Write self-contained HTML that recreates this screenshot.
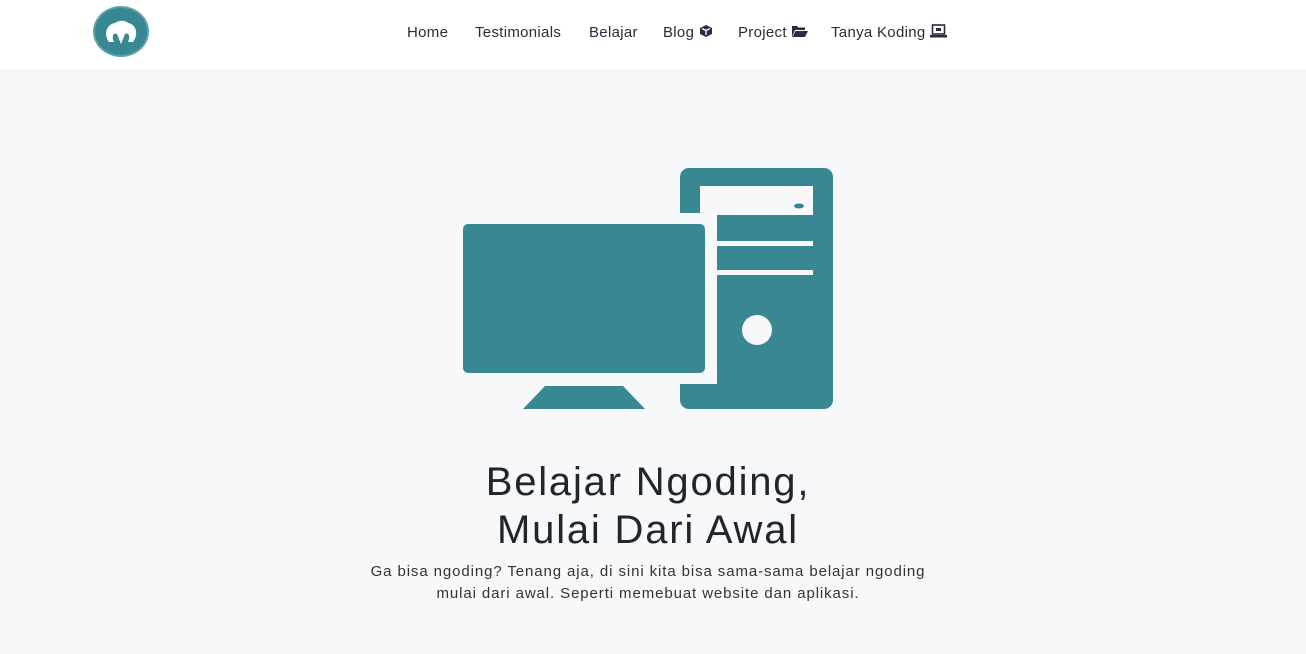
<!DOCTYPE html>
<html><head><meta charset="utf-8"><style>
*{margin:0;padding:0;box-sizing:border-box}
body{width:1306px;height:654px;background:#f7f8fa;font-family:"Liberation Sans",sans-serif;color:#212529;overflow:hidden;position:relative}
.nav{position:absolute;left:0;top:0;width:1306px;height:69px;background:#fff}
.logo{position:absolute;left:93px;top:6px;width:56px;height:51px;border-radius:50%;background:#3a8794;border:2px solid #5aa3ad}
.links{position:absolute;top:24px;left:407px;font-size:15px;color:#2b2b3a;letter-spacing:0.3px}
.links span{position:absolute;white-space:nowrap}
h1{position:absolute;left:0;width:1296px;text-align:center;font-weight:400;font-size:40px;line-height:48px;top:458px;color:#22252b;letter-spacing:1.8px}
p{position:absolute;left:0;width:1296px;text-align:center;font-size:15px;line-height:22px;top:561px;color:#333;letter-spacing:0.9px}
</style></head><body>
<div class="nav">
<div class="logo"><svg width="52" height="47" viewBox="0 0 52 47"><path d="M14 34 C8 26 12 16 20 15 C24 12 30 12 33 15 C41 16 44 26 38 34 L33 34 C36 28 33 24 30 26 L26 36 L22 26 C19 24 16 28 19 34Z" fill="#fff"/></svg></div>
<div class="links">
<span style="left:0">Home</span>
<span style="left:68px">Testimonials</span>
<span style="left:182px">Belajar</span>
<span style="left:256px">Blog <svg width="14" height="14" viewBox="0 0 14 14" style="vertical-align:-1px"><path d="M7 1 L13 4 L13 10 L7 13 L1 10 L1 4Z" fill="#2b2b45"/><path d="M3 4.5 L7 6.5 L11 4.5 M7 6.5 L7 11" stroke="#fff" stroke-width="1.3" fill="none"/></svg></span>
<span style="left:331px">Project <svg width="17" height="13" viewBox="0 0 17 13" style="vertical-align:-1px"><path d="M1 1 H6 L7.5 2.5 H14 V5 H4 L1 12Z M4.5 6 H17 L14 12 H1.5Z" fill="#2b2b45"/></svg></span>
<span style="left:424px">Tanya Koding <svg width="17" height="14" viewBox="0 0 17 14" style="vertical-align:-1px"><rect x="2.5" y="1" width="12" height="9" fill="none" stroke="#2b2b45" stroke-width="1.6"/><rect x="6" y="4" width="5" height="3" fill="#2b2b45"/><rect x="0" y="11" width="17" height="2.5" fill="#2b2b45"/></svg></span>
</div></div>
<svg style="position:absolute;left:0;top:0" width="1306" height="654">
<rect x="680" y="168" width="153" height="241" rx="9" fill="#3a8794"/>
<rect x="680" y="213" width="37" height="171" fill="#f7f8fa"/>
<rect x="700" y="186" width="113" height="29" fill="#f7f8fa"/>
<rect x="717" y="241" width="96" height="5" fill="#f7f8fa"/>
<rect x="717" y="270" width="96" height="5" fill="#f7f8fa"/>
<circle cx="757" cy="330" r="15" fill="#f7f8fa"/>
<ellipse cx="799" cy="206" rx="5" ry="2.5" fill="#3a8794"/>
<rect x="463" y="224" width="242" height="149" rx="5" fill="#3a8794"/>
<path d="M545 386 H623 L645 409 H523Z" fill="#3a8794"/>
</svg>
<h1>Belajar Ngoding,<br>Mulai Dari Awal</h1>
<p>Ga bisa ngoding? Tenang aja, di sini kita bisa sama-sama belajar ngoding<br>mulai dari awal. Seperti memebuat website dan aplikasi.</p>
</body></html>
